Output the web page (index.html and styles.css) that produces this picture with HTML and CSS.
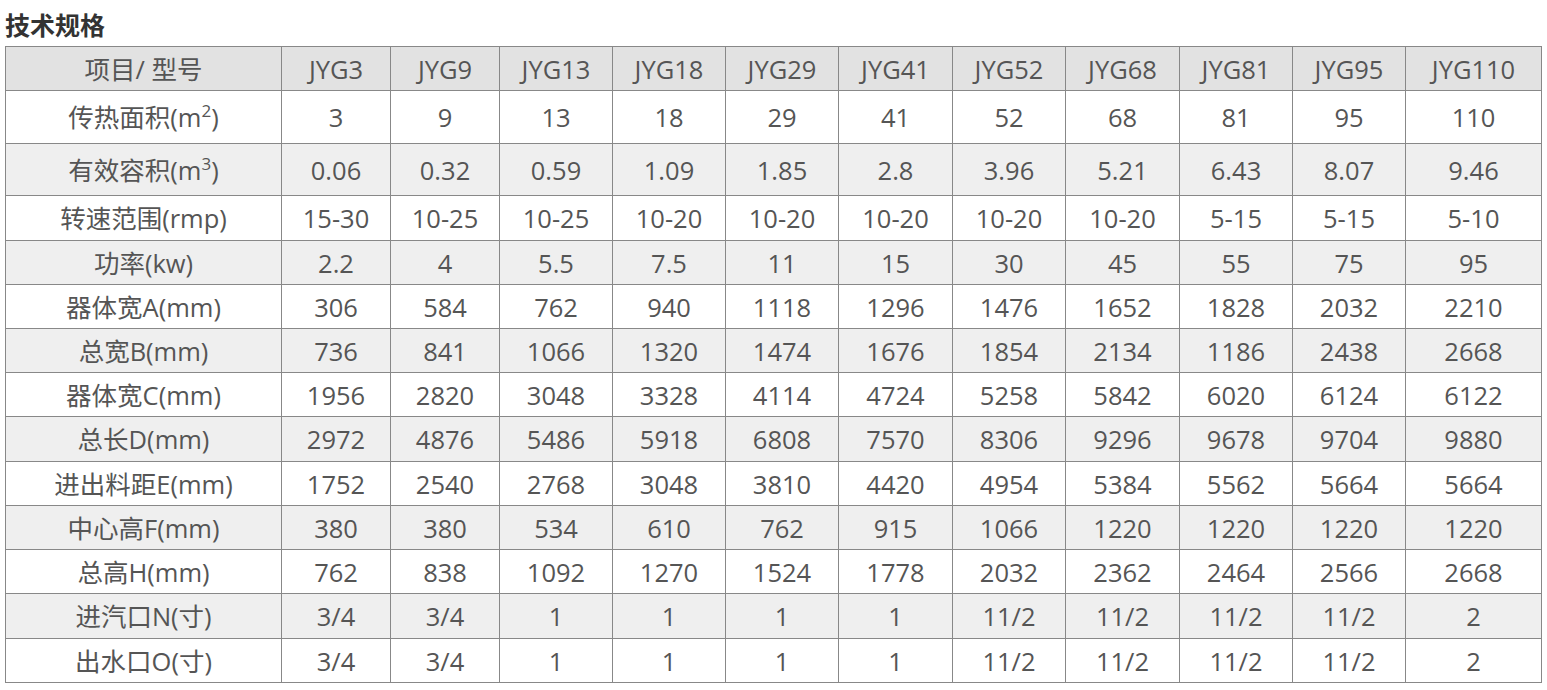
FILE: index.html
```html
<!DOCTYPE html>
<html lang="zh-CN">
<head>
<meta charset="utf-8">
<title>技术规格</title>
<link rel="stylesheet" href="styles.css">
</head>
<body>
<div class="page">
  <h2 class="title">技术规格</h2>
  <table class="spec">
    <colgroup>
      <col class="c-name">
      <col class="c-sm"><col class="c-sm">
      <col class="c-md"><col class="c-md"><col class="c-md"><col class="c-lg"><col class="c-md"><col class="c-lg"><col class="c-md"><col class="c-md">
      <col class="c-xl">
    </colgroup>
    <tr class="head"><td>项目/ 型号</td><td>JYG3</td><td>JYG9</td><td>JYG13</td><td>JYG18</td><td>JYG29</td><td>JYG41</td><td>JYG52</td><td>JYG68</td><td>JYG81</td><td>JYG95</td><td>JYG110</td></tr>
    <tr class="r53"><td>传热面积(m<sup>2</sup>)</td><td>3</td><td>9</td><td>13</td><td>18</td><td>29</td><td>41</td><td>52</td><td>68</td><td>81</td><td>95</td><td>110</td></tr>
    <tr class="alt r52"><td>有效容积(m<sup>3</sup>)</td><td>0.06</td><td>0.32</td><td>0.59</td><td>1.09</td><td>1.85</td><td>2.8</td><td>3.96</td><td>5.21</td><td>6.43</td><td>8.07</td><td>9.46</td></tr>
    <tr class="r45"><td>转速范围(rmp)</td><td>15-30</td><td>10-25</td><td>10-25</td><td>10-20</td><td>10-20</td><td>10-20</td><td>10-20</td><td>10-20</td><td>5-15</td><td>5-15</td><td>5-10</td></tr>
    <tr class="alt"><td>功率(kw)</td><td>2.2</td><td>4</td><td>5.5</td><td>7.5</td><td>11</td><td>15</td><td>30</td><td>45</td><td>55</td><td>75</td><td>95</td></tr>
    <tr><td>器体宽A(mm)</td><td>306</td><td>584</td><td>762</td><td>940</td><td>1118</td><td>1296</td><td>1476</td><td>1652</td><td>1828</td><td>2032</td><td>2210</td></tr>
    <tr class="alt"><td>总宽B(mm)</td><td>736</td><td>841</td><td>1066</td><td>1320</td><td>1474</td><td>1676</td><td>1854</td><td>2134</td><td>1186</td><td>2438</td><td>2668</td></tr>
    <tr><td>器体宽C(mm)</td><td>1956</td><td>2820</td><td>3048</td><td>3328</td><td>4114</td><td>4724</td><td>5258</td><td>5842</td><td>6020</td><td>6124</td><td>6122</td></tr>
    <tr class="alt r45"><td>总长D(mm)</td><td>2972</td><td>4876</td><td>5486</td><td>5918</td><td>6808</td><td>7570</td><td>8306</td><td>9296</td><td>9678</td><td>9704</td><td>9880</td></tr>
    <tr><td>进出料距E(mm)</td><td>1752</td><td>2540</td><td>2768</td><td>3048</td><td>3810</td><td>4420</td><td>4954</td><td>5384</td><td>5562</td><td>5664</td><td>5664</td></tr>
    <tr class="alt"><td>中心高F(mm)</td><td>380</td><td>380</td><td>534</td><td>610</td><td>762</td><td>915</td><td>1066</td><td>1220</td><td>1220</td><td>1220</td><td>1220</td></tr>
    <tr><td>总高H(mm)</td><td>762</td><td>838</td><td>1092</td><td>1270</td><td>1524</td><td>1778</td><td>2032</td><td>2362</td><td>2464</td><td>2566</td><td>2668</td></tr>
    <tr class="alt r45"><td>进汽口N(寸)</td><td>3/4</td><td>3/4</td><td>1</td><td>1</td><td>1</td><td>1</td><td>11/2</td><td>11/2</td><td>11/2</td><td>11/2</td><td>2</td></tr>
    <tr><td>出水口O(寸)</td><td>3/4</td><td>3/4</td><td>1</td><td>1</td><td>1</td><td>1</td><td>11/2</td><td>11/2</td><td>11/2</td><td>11/2</td><td>2</td></tr>
  </table>
</div>
</body>
</html>
```

FILE: styles.css
```css
html, body {
  margin: 0;
  padding: 0;
  background: #ffffff;
}

.page {
  padding: 0 5px;
  font-family: "Open Sans", "Noto Sans CJK SC", sans-serif;
  color: #555555;
}

.title {
  margin: 6px 0 4px 0;
  font-family: "Noto Sans CJK SC", sans-serif;
  font-size: 25px;
  line-height: 36px;
  font-weight: 700;
  color: #333333;
}

.spec {
  border-collapse: collapse;
  table-layout: fixed;
  width: 1537px;
  font-size: 25.5px;
}

.c-name { width: 276px; }
.c-sm { width: 109px; }
.c-md { width: 113px; }
.c-lg { width: 114px; }
.c-xl { width: 136px; }

.spec td {
  border: 1px solid #888888;
  text-align: center;
  vertical-align: middle;
  padding: 0;
  height: 43px;
  line-height: 32px;
  white-space: nowrap;
}

.spec .r45 td { height: 44px; }
.spec .r52 td { height: 51px; }
.spec .r53 td { height: 52px; }

.spec .head td {
  background: #e2e2e2;
}

.spec .alt td {
  background: #efefef;
}

.spec sup {
  font-size: 17px;
  line-height: 1;
  vertical-align: 0.6em;
}
```
